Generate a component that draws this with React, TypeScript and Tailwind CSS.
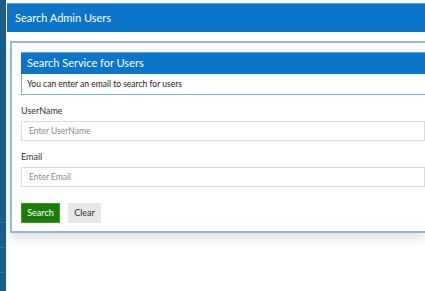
import React from "react";

const fieldLabel = "block text-[9px] leading-[12px] text-[#333]";
const fieldInput =
  "block w-full h-[20px] border border-[#dcdcdc] px-[7px] text-[8.5px] text-[#333] placeholder:text-[#8a8a8a] outline-none bg-white";

const App: React.FC = () => {
  return (
    <div className="flex min-h-[291px] bg-white" style={{ fontFamily: 'Lato, "Open Sans", sans-serif' }}>
      {/* Side rail */}
      <div className="w-[6px] bg-[#1d5d8c] flex flex-col">
        <div className="h-[222px]" />
        <div className="h-[25px] border-t border-[#2f6f9c]" />
        <div className="h-[25px] border-t border-[#2f6f9c]" />
        <div className="flex-1 border-t border-[#2f6f9c]" />
      </div>

      <div className="flex-1 pl-[1px] pt-[3px] min-w-0">
        {/* Page header */}
        <div className="h-[29px] bg-[#0b75c9] border-t border-[#5a9fdc] flex items-center px-[8px]">
          <h1 className="text-white text-[11px]">Search Admin Users</h1>
        </div>

        {/* Panel */}
        <div className="ml-[3px] mt-[9px] border-2 border-r-0 border-[#8dbbe6] shadow-[0_6px_10px_rgba(0,0,0,0.12)] pl-[9px] pt-[9px] pb-[8px]">
          <div>
            <div className="h-[22px] bg-[#0b75c9] border-t border-[#5a9fdc] flex items-center px-[6px]">
              <h2 className="text-white text-[11px]">Search Service for Users</h2>
            </div>
            <div className="h-[21px] border-l border-b border-[#7aaee0] flex items-center px-[5px]">
              <p className="text-[8.5px] text-[#222]">You can enter an email to search for users</p>
            </div>
          </div>

          <div className="mt-[10px]">
            <label className={fieldLabel}>UserName</label>
            <input className={`${fieldInput} mt-[4px]`} placeholder="Enter UserName" />
          </div>

          <div className="mt-[10px]">
            <label className={fieldLabel}>Email</label>
            <input className={`${fieldInput} mt-[4px]`} placeholder="Enter Email" />
          </div>

          <div className="mt-[16px] flex gap-[8px]">
            <button className="h-[20px] w-[39px] bg-[#1b7c0c] border border-[#3b9a2c] text-white text-[9px]">
              Search
            </button>
            <button className="h-[20px] w-[33px] bg-[#e7e7e7] text-[#333] text-[9px]">
              Clear
            </button>
          </div>
        </div>
      </div>
    </div>
  );
};

export default App;
